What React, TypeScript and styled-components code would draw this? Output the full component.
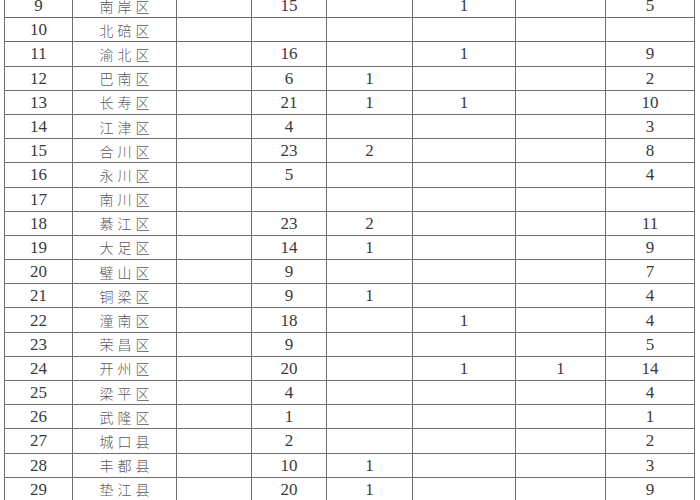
import React from "react";
import styled, { createGlobalStyle } from "styled-components";

const Global = createGlobalStyle`
  html, body { margin: 0; padding: 0; background: #ffffff; }
  body { width: 700px; height: 500px; overflow: hidden; }
`;

const Page = styled.div`
  padding-left: 4px;
  margin-top: -7px;
`;

const Table = styled.table`
  border-collapse: collapse;
  table-layout: fixed;
  width: 690px;
`;

const Cell = styled.td<{ $cn?: boolean }>`
  border: 1px solid #6e6e6e;
  height: 23.2px;
  padding: 0;
  text-align: center;
  vertical-align: middle;
  color: ${(p) => (p.$cn ? "#5a5a5a" : "#3a3a3a")};
  font-family: ${(p) =>
    p.$cn
      ? '"Noto Sans CJK SC", sans-serif'
      : '"Liberation Serif", "Times New Roman", serif'};
  font-size: ${(p) => (p.$cn ? "14px" : "17px")};
  font-weight: ${(p) => (p.$cn ? 300 : 400)};
  letter-spacing: ${(p) => (p.$cn ? "4px" : "0")};
  text-indent: ${(p) => (p.$cn ? "4px" : "0")};
  line-height: 1;
`;

const widths = [68, 104, 75, 75, 86, 103, 90, 89];

type Row = [number, string, string, string, string, string, string, string];

const rows: Row[] = [
  [9, "南岸区", "", "15", "", "1", "", "5"],
  [10, "北碚区", "", "", "", "", "", ""],
  [11, "渝北区", "", "16", "", "1", "", "9"],
  [12, "巴南区", "", "6", "1", "", "", "2"],
  [13, "长寿区", "", "21", "1", "1", "", "10"],
  [14, "江津区", "", "4", "", "", "", "3"],
  [15, "合川区", "", "23", "2", "", "", "8"],
  [16, "永川区", "", "5", "", "", "", "4"],
  [17, "南川区", "", "", "", "", "", ""],
  [18, "綦江区", "", "23", "2", "", "", "11"],
  [19, "大足区", "", "14", "1", "", "", "9"],
  [20, "璧山区", "", "9", "", "", "", "7"],
  [21, "铜梁区", "", "9", "1", "", "", "4"],
  [22, "潼南区", "", "18", "", "1", "", "4"],
  [23, "荣昌区", "", "9", "", "", "", "5"],
  [24, "开州区", "", "20", "", "1", "1", "14"],
  [25, "梁平区", "", "4", "", "", "", "4"],
  [26, "武隆区", "", "1", "", "", "", "1"],
  [27, "城口县", "", "2", "", "", "", "2"],
  [28, "丰都县", "", "10", "1", "", "", "3"],
  [29, "垫江县", "", "20", "1", "", "", "9"],
];

export default function App() {
  return (
    <>
      <Global />
      <Page>
        <Table>
          <colgroup>
            {widths.map((w, i) => (
              <col key={i} style={{ width: w }} />
            ))}
          </colgroup>
          <tbody>
            {rows.map((r) => (
              <tr key={r[0]}>
                <Cell>{r[0]}</Cell>
                <Cell $cn>{r[1]}</Cell>
                {r.slice(2).map((v, i) => (
                  <Cell key={i}>{v}</Cell>
                ))}
              </tr>
            ))}
          </tbody>
        </Table>
      </Page>
    </>
  );
}
